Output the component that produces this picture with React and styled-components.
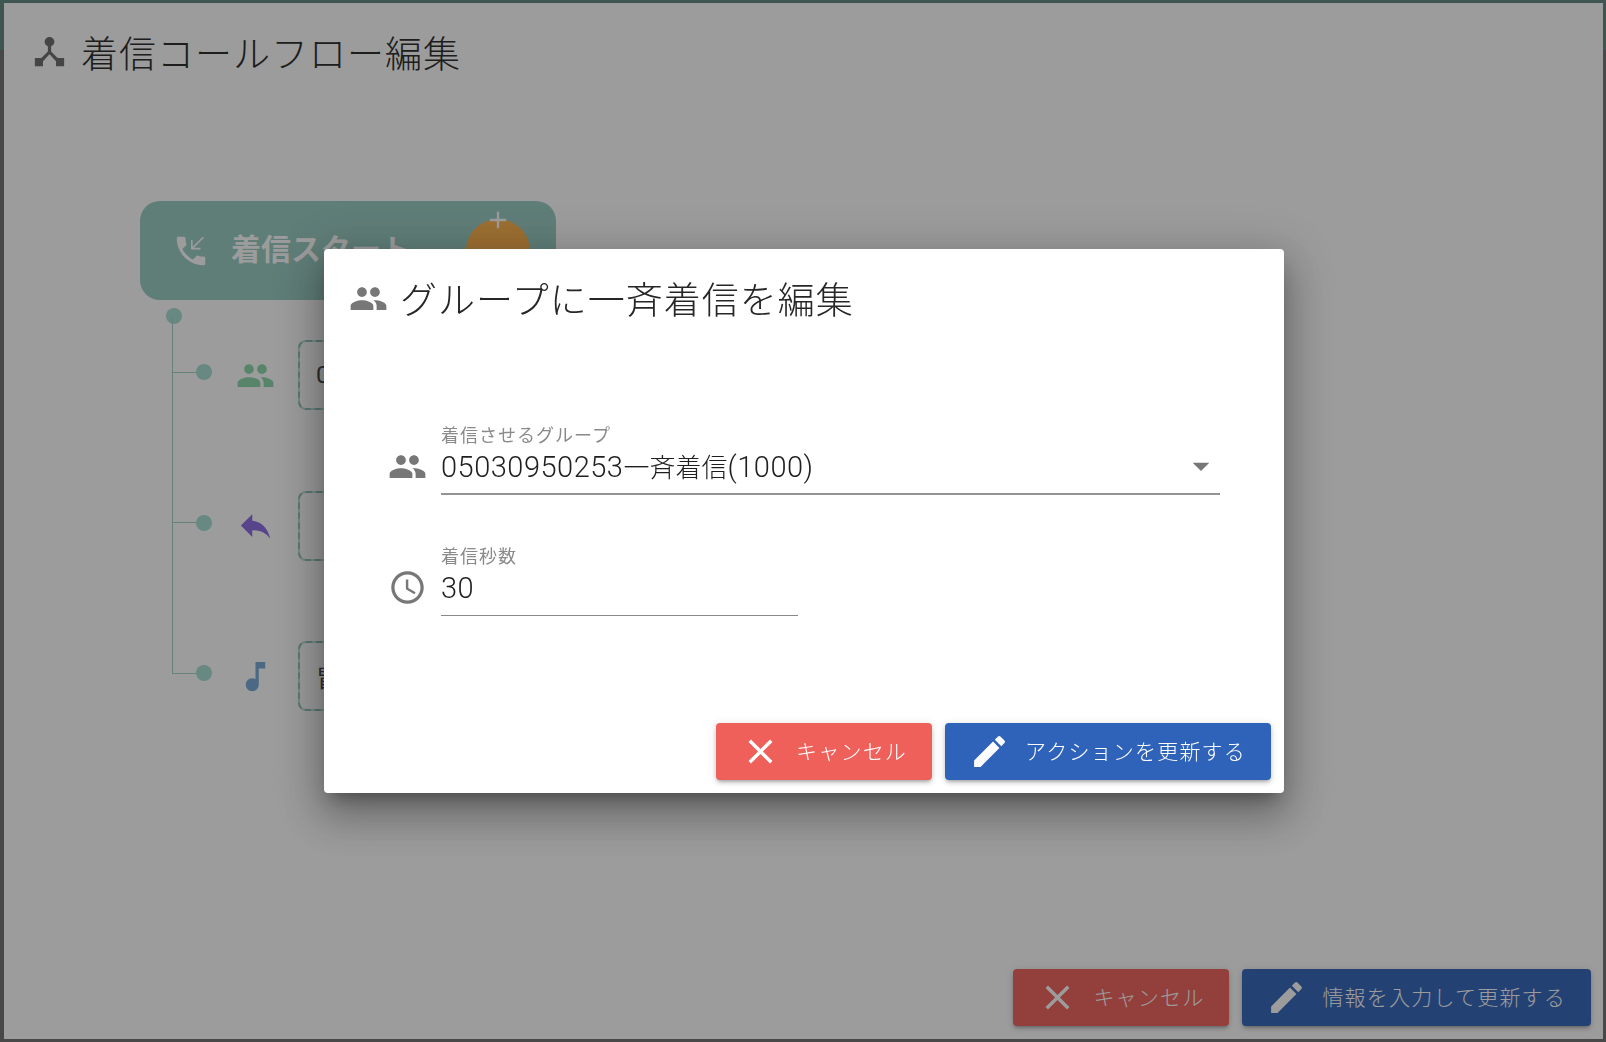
import React from 'react'
import styled, { createGlobalStyle } from 'styled-components'
import {
  MdDeviceHub,
  MdPeople,
  MdPhoneCallback,
  MdReply,
  MdMusicNote,
  MdAccessTime,
  MdArrowDropDown,
  MdClose,
  MdEdit,
  MdAdd
} from 'react-icons/md'

const GlobalStyle = createGlobalStyle`
  html, body {
    margin: 0;
    height: 100%;
    overflow: hidden;
    font-family: Roboto, "Noto Sans CJK JP", sans-serif;
  }
  * { box-sizing: border-box; }
`

const Page = styled.div`
  width: 1606px;
  height: 1042px;
  padding: 3px 3px 3px 4px;
  background:
    linear-gradient(#5f857f 0 3px, transparent 3px),
    linear-gradient(#5f857f 0 50px, #6e6e6e 50px);
`

const Panel = styled.div`
  display: flex;
  flex-direction: column;
  height: 100%;
  background: #fff;
  padding: 0 12px 13px 26px;
`

const PageHeader = styled.div`
  display: flex;
  align-items: center;
  gap: 12px;
  height: 97px;
  svg { color: #6a6a6a; }
`

const Title = styled.h1`
  margin: 0;
  font-size: 37px;
  font-weight: 300;
  letter-spacing: 1px;
  color: #262626;
`

const Canvas = styled.div`
  flex: 1;
  padding: 101px 0 0 110px;
`

const StartCard = styled.div`
  position: relative;
  display: flex;
  align-items: center;
  gap: 21px;
  width: 416px;
  height: 99px;
  padding-left: 32px;
  border-radius: 20px;
  background: #98cbc2;
  color: #fff;
  font-size: 30px;
  font-weight: 700;
`

const CardLabel = styled.span`
  margin-bottom: 8px;
`

const AddBubble = styled.div`
  position: absolute;
  left: 326px;
  top: 18px;
  width: 64px;
  height: 64px;
  border-radius: 50%;
  background: #ffb24a;
  svg {
    position: absolute;
    left: 18px;
    top: -13px;
    color: #fff;
  }
`

const Tree = styled.div`
  position: relative;
  margin: 8px 0 0 32px;
  &::before {
    content: '';
    position: absolute;
    left: 0;
    top: 8px;
    bottom: 37px;
    width: 1px;
    background: #a0d0c8;
  }
`

const RootDot = styled.div`
  width: 16px;
  height: 16px;
  margin-left: -6px;
  border-radius: 50%;
  background: #a5dcd2;
`

const Row = styled.div`
  display: flex;
  align-items: center;
  height: 70px;
  margin-top: ${props => props.$first ? '16px' : '80.5px'};
`

const Branch = styled.div`
  display: flex;
  align-items: center;
  width: 40px;
  margin-bottom: 6px;
  &::before {
    content: '';
    width: 24px;
    height: 1px;
    background: #a0d0c8;
  }
  &::after {
    content: '';
    width: 16px;
    height: 16px;
    border-radius: 50%;
    background: #a5dcd2;
  }
`

const ActionIcon = styled.div`
  display: flex;
  justify-content: center;
  width: 86px;
  color: ${props => props.$color};
  line-height: 0;
`

const ActionBox = styled.div`
  display: flex;
  align-items: center;
  width: 500px;
  height: 70px;
  padding-left: 16px;
  border: 2px dashed #8cc3b8;
  border-radius: 8px;
  background:
    linear-gradient(#fff, #fff) padding-box,
    linear-gradient(#c0e0d8, #c0e0d8) border-box;
  font-size: 24px;
  color: #444;
`

const Footer = styled.div`
  display: flex;
  justify-content: flex-end;
  gap: 13px;
`

const ActionButton = styled.button`
  display: flex;
  align-items: center;
  gap: 15px;
  height: 57px;
  padding: 0 25px 3px 24px;
  border: 0;
  border-radius: 4px;
  background: ${props => props.$danger ? '#f0605b' : '#2f62b9'};
  color: #fff;
  font-family: inherit;
  font-size: 21px;
  font-weight: 300;
  letter-spacing: 1.2px;
  box-shadow: 0 3px 3px -2px rgba(0,0,0,.2), 0 3px 4px rgba(0,0,0,.14), 0 1px 8px rgba(0,0,0,.12);
  svg { margin-top: 3px; }
`

const Overlay = styled.div`
  position: fixed;
  inset: 0;
  display: flex;
  align-items: center;
  justify-content: center;
  background: rgba(20, 20, 20, .42);
`

const Modal = styled.div`
  display: flex;
  flex-direction: column;
  width: 960px;
  height: 544px;
  margin-left: 2px;
  padding: 0 13px 13px 0;
  border-radius: 4px;
  background: #fff;
  box-shadow: 0 11px 15px -7px rgba(0,0,0,.3), 0 24px 38px 3px rgba(0,0,0,.2), 0 9px 46px 8px rgba(0,0,0,.18);
`

const ModalHeader = styled.div`
  display: flex;
  align-items: center;
  gap: 12px;
  height: 98px;
  padding-left: 25px;
  svg { color: #777; }
`

const Form = styled.div`
  flex: 1;
  padding: 78px 0 0 64px;
`

const Field = styled.div`
  display: flex;
  align-items: flex-end;
  gap: 14px;
  margin-bottom: 51px;
`

const FieldIcon = styled.div`
  flex: none;
  width: 39px;
  margin-bottom: 9px;
  color: #777;
  line-height: 0;
`

const Control = styled.div`
  position: relative;
  width: ${props => props.$width}px;
  height: 70px;
  border-bottom: ${props => props.$thick ? '2px solid #949494' : '1px solid #888'};
`

const Label = styled.div`
  font-size: 18px;
  line-height: 22px;
  letter-spacing: 1px;
  color: #8a8a8a;
`

const Value = styled.div`
  font-size: 29px;
  font-weight: 300;
  line-height: 40px;
  letter-spacing: .5px;
  color: #1f1f1f;
`

const ValueCjk = styled.span`
  font-size: 26px;
  letter-spacing: 0;
`

const DropArrow = styled.div`
  position: absolute;
  right: -1px;
  top: 21px;
  color: #777;
  line-height: 0;
`

export default function App() {
  return (
    <>
      <GlobalStyle />
      <Page>
        <Panel>
          <PageHeader>
            <MdDeviceHub size={39} />
            <Title>着信コールフロー編集</Title>
          </PageHeader>
          <Canvas>
            <StartCard>
              <MdPhoneCallback size={38} />
              <CardLabel>着信スタート</CardLabel>
              <AddBubble><MdAdd size={28} /></AddBubble>
            </StartCard>
            <Tree>
              <RootDot />
              <Row $first>
                <Branch />
                <ActionIcon $color="#8ad8aa"><MdPeople size={39} /></ActionIcon>
                <ActionBox>05030950253</ActionBox>
              </Row>
              <Row>
                <Branch />
                <ActionIcon $color="#8a68e0"><MdReply size={39} /></ActionIcon>
                <ActionBox />
              </Row>
              <Row>
                <Branch />
                <ActionIcon $color="#74a8d8"><MdMusicNote size={39} /></ActionIcon>
                <ActionBox>冒頭</ActionBox>
              </Row>
            </Tree>
          </Canvas>
          <Footer>
            <ActionButton $danger><MdClose size={41} />キャンセル</ActionButton>
            <ActionButton><MdEdit size={41} />情報を入力して更新する</ActionButton>
          </Footer>
        </Panel>
      </Page>
      <Overlay>
        <Modal>
          <ModalHeader>
            <MdPeople size={39} />
            <Title>グループに一斉着信を編集</Title>
          </ModalHeader>
          <Form>
            <Field>
              <FieldIcon><MdPeople size={39} /></FieldIcon>
              <Control $width={779} $thick>
                <Label>着信させるグループ</Label>
                <Value>05030950253<ValueCjk>一斉着信</ValueCjk>(1000)</Value>
                <DropArrow><MdArrowDropDown size={40} /></DropArrow>
              </Control>
            </Field>
            <Field>
              <FieldIcon><MdAccessTime size={39} /></FieldIcon>
              <Control $width={357}>
                <Label>着信秒数</Label>
                <Value>30</Value>
              </Control>
            </Field>
          </Form>
          <Footer>
            <ActionButton $danger><MdClose size={41} />キャンセル</ActionButton>
            <ActionButton><MdEdit size={41} />アクションを更新する</ActionButton>
          </Footer>
        </Modal>
      </Overlay>
    </>
  )
}
